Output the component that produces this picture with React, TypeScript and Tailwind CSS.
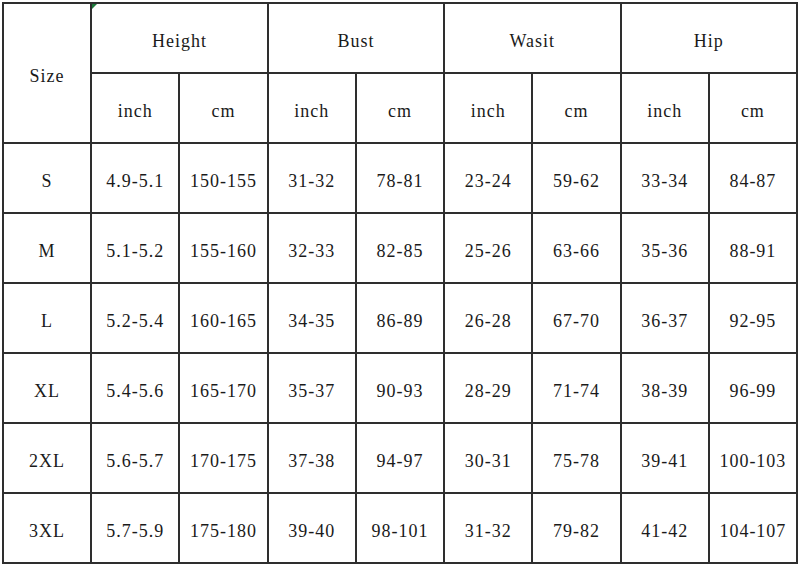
const rows = [
  ['S', '4.9-5.1', '150-155', '31-32', '78-81', '23-24', '59-62', '33-34', '84-87'],
  ['M', '5.1-5.2', '155-160', '32-33', '82-85', '25-26', '63-66', '35-36', '88-91'],
  ['L', '5.2-5.4', '160-165', '34-35', '86-89', '26-28', '67-70', '36-37', '92-95'],
  ['XL', '5.4-5.6', '165-170', '35-37', '90-93', '28-29', '71-74', '38-39', '96-99'],
  ['2XL', '5.6-5.7', '170-175', '37-38', '94-97', '30-31', '75-78', '39-41', '100-103'],
  ['3XL', '5.7-5.9', '175-180', '39-40', '98-101', '31-32', '79-82', '41-42', '104-107'],
];

const groups = ['Height', 'Bust', 'Wasit', 'Hip'];

const cell = 'bg-white flex items-center justify-center pt-[6px]';

const App = () => {
  return (
    <div
      className="w-[800px] h-[567px] bg-white pt-[2px] pl-[2px] overflow-hidden text-[18px] tracking-[1px] text-[#1a1a1a]"
      style={{ fontFamily: '"Liberation Serif", "Noto Sans CJK SC", serif' }}
    >
      <div className="w-[796px] grid grid-cols-9 auto-rows-[68px] gap-[2px] p-[2px] bg-[#2e2e2e]">
        <div className={`${cell} row-span-2`}>Size</div>
        {groups.map((g, i) => (
          <div key={g} className={`${cell} col-span-2 relative`}>
            {i === 0 && (
              <svg className="absolute left-0 top-0" width="5" height="5" viewBox="0 0 5 5">
                <polygon points="0,0 5,0 0,5" fill="#1e7a3c" />
              </svg>
            )}
            {g}
          </div>
        ))}
        {groups.map(g => (
          <div key={g + '-u'} className="contents">
            <div className={cell}>inch</div>
            <div className={cell}>cm</div>
          </div>
        ))}
        {rows.map(r =>
          r.map((v, j) => (
            <div key={r[0] + j} className={cell}>{v}</div>
          ))
        )}
      </div>
    </div>
  );
};

export default App;
